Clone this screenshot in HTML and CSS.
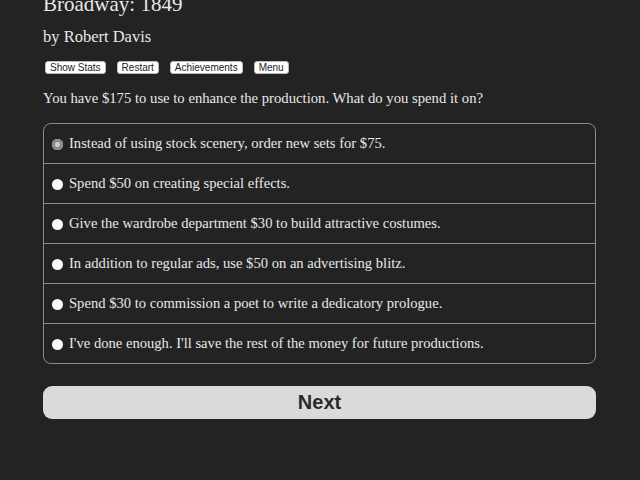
FILE: index.html
```html
<!DOCTYPE html>
<html lang="en">
<head>
    <meta charset="UTF-8">
    <meta name="viewport" content="width=device-width, initial-scale=1.0">
    <title>Broadway: 1849</title>
    <link rel="stylesheet" href="styles.css">
</head>
<body>

    <div class="container" id="main">
        <h1 class="gameTitle">Broadway: 1849</h1>
        <h2 class="author">by Robert Davis</h2>

        <div class="buttons">
            <button class="spacedLink">Show Stats</button>
            <button class="spacedLink">Restart</button>
            <button class="spacedLink">Achievements</button>
            <button class="spacedLink">Menu</button>
        </div>

        <p>You have $175 to use to enhance the production. What do you spend it on?</p>

        <form id="choiceForm" onsubmit="return false">
            <div class="choice">
                <label class="option first"><input type="radio" name="choice" value="0" disabled><span>Instead of using stock scenery, order new sets for $75.</span></label>
                <label class="option"><input type="radio" name="choice" value="1"><span>Spend $50 on creating special effects.</span></label>
                <label class="option"><input type="radio" name="choice" value="2"><span>Give the wardrobe department $30 to build attractive costumes.</span></label>
                <label class="option"><input type="radio" name="choice" value="3"><span>In addition to regular ads, use $50 on an advertising blitz.</span></label>
                <label class="option"><input type="radio" name="choice" value="4"><span>Spend $30 to commission a poet to write a dedicatory prologue.</span></label>
                <label class="option last"><input type="radio" name="choice" value="5"><span>I've done enough. I'll save the rest of the money for future productions.</span></label>
            </div>
            <button type="submit" class="next">Next</button>
        </form>
    </div>

</body>
</html>
```

FILE: styles.css
```css
body {
    margin: 0;
    background-color: #232323;
    color: #e8e8e8;
    font-family: "Liberation Serif", "Times New Roman", serif;
    overflow: hidden;
}

.container {
    width: 553px;
    margin-left: 43px;
}

.gameTitle {
    font-size: 21px;
    font-weight: normal;
    margin: -10px 0 0;
    line-height: 28px;
}

.author {
    font-size: 16.5px;
    font-weight: normal;
    margin: 9px 0 0;
    line-height: 20px;
}

.buttons {
    display: flex;
    gap: 11px;
    margin-top: 14px;
    padding-left: 2px;
}

.spacedLink {
    font-family: "Liberation Sans", Arial, sans-serif;
    font-size: 10px;
    line-height: 11px;
    background: white;
    color: #222;
    border: 1px solid #bbb;
    border-radius: 3px;
    padding: 0 4px;
    height: 13px;
}

p {
    font-size: 14.7px;
    margin: 15px 0 0;
    line-height: 18px;
}

.choice {
    margin-top: 16px;
    border: 1px solid #8c8c8c;
    border-radius: 8px;
}

.option {
    display: flex;
    align-items: center;
    height: 39px;
    padding-left: 8px;
    font-size: 14.6px;
    border-top: 1px solid #8c8c8c;
}

.option.first {
    border-top: none;
}

.option input {
    appearance: none;
    width: 11px;
    height: 11px;
    margin: 1px 6px 0 0;
    border-radius: 50%;
    background: white;
}

.option input:disabled {
    background: #8a8a8a;
    box-shadow: inset 0 0 0 3px #8a8a8a, inset 0 0 0 6px #d0d0d0;
}

.next {
    display: block;
    width: 100%;
    height: 33px;
    margin-top: 22px;
    background-color: #dadada;
    color: #2a2a2a;
    border: none;
    border-radius: 9px;
    font-family: "Liberation Sans", Arial, sans-serif;
    font-size: 20px;
    font-weight: bold;
}
```
